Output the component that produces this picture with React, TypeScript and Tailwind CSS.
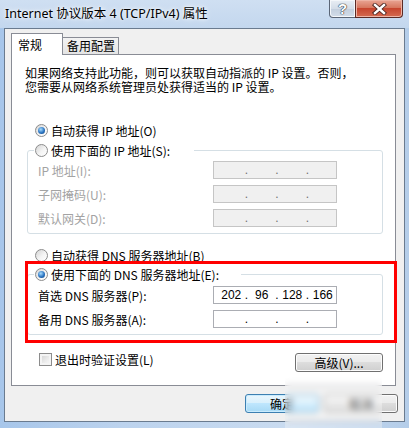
import React from "react";

const cjk = "font-['Noto_Sans_CJK_SC',sans-serif]";

function Radio({ checked }: { checked?: boolean }) {
  return (
    <span className="flex h-[13px] w-[13px] shrink-0 items-center justify-center rounded-full border border-[#8c8c8c] bg-[linear-gradient(135deg,#d4d4d4,#f4f4f4_55%,#ffffff)]">
      {checked ? (
        <span className="h-[7px] w-[7px] rounded-full bg-[radial-gradient(circle_at_40%_35%,#a8ddff,#2b74c1_55%,#0c3e78)]" />
      ) : null}
    </span>
  );
}

function IpField({ values, disabled }: { values?: string[]; disabled?: boolean }) {
  const segs = values ?? ["", "", "", ""];
  return (
    <div
      className={
        disabled
          ? "flex h-[18px] w-[124px] items-center border border-[#c5c5c5] bg-[#f0f0f0] pl-[4px] font-['Liberation_Sans',sans-serif] text-[12px] leading-[16px] text-[#6f6f6f]"
          : "flex h-[18px] w-[124px] items-center border border-[#abadb3] bg-white pl-[4px] font-['Liberation_Sans',sans-serif] text-[12px] leading-[16px] text-black"
      }
    >
      {segs.map((s, i) => (
        <React.Fragment key={i}>
          <span className="w-[27px] text-center">{s}</span>
          {i < 3 ? <span className="w-[4px] text-center">.</span> : null}
        </React.Fragment>
      ))}
    </div>
  );
}

function FieldRow({
  label,
  values,
  disabled,
  className = "",
}: {
  label: string;
  values?: string[];
  disabled?: boolean;
  className?: string;
}) {
  return (
    <div className={`flex h-[18px] items-center ${className}`}>
      <span className={disabled ? "w-[185px] pl-[10px] text-[#a3a3a3]" : "w-[185px] pl-[10px] text-black"}>
        {label}
      </span>
      <IpField values={values} disabled={disabled} />
    </div>
  );
}

function WinButton({ children, primary }: { children: React.ReactNode; primary?: boolean }) {
  return (
    <div
      className={
        primary
          ? "flex h-[19px] w-[74px] items-center justify-center rounded-[3px] border border-[#3c7fb1] bg-[linear-gradient(#eaf6fd,#d9f0fc_45%,#bee6fd_50%,#a7d9f5)] text-[12px] leading-none shadow-[inset_0_0_0_1px_#c9ebfd]"
          : "flex h-[19px] w-[74px] items-center justify-center rounded-[3px] border border-[#707070] bg-[linear-gradient(#f2f2f2,#ebebeb_45%,#dddddd_50%,#cfcfcf)] text-[12px] leading-none shadow-[inset_0_0_0_1px_#fcfcfc]"
      }
    >
      {children}
    </div>
  );
}

export default function App() {
  return (
    <div className="relative flex h-[428px] w-[409px] flex-col overflow-hidden bg-[linear-gradient(90deg,#a7c6ea,#bcd3ee_30%,#c9dbf0_70%,#b4cde9)]">
      {/* title bar */}
      <div className="flex h-[28px] shrink-0 items-start justify-between bg-[linear-gradient(180deg,#cfdff2,#c3d7ee)]">
        <span className="mt-[6px] pl-[5px] font-['Noto_Sans','Noto_Sans_CJK_SC',sans-serif] text-[12.5px] leading-[16px] text-black [text-shadow:0_0_6px_#fff,0_0_3px_#fff]">
          Internet 协议版本 4 (TCP/IPv4) 属性
        </span>
        <div className="mr-[6px] flex">
          <div className="flex h-[18px] w-[27px] items-center justify-center rounded-bl-[4px] border border-t-0 border-[#5a6576] bg-[linear-gradient(#e9eef4,#d4dde8_50%,#c2cedd_51%,#d3dde9)] shadow-[inset_0_0_0_1px_#f4f7fa]">
            <span className="font-['Liberation_Sans',sans-serif] text-[15px] font-bold leading-none text-white [text-shadow:0_0_1px_#2a2f38,0_0_1px_#2a2f38,0_0_1px_#2a2f38]">
              ?
            </span>
          </div>
          <div className="-ml-px flex h-[18px] w-[48px] items-center justify-center rounded-br-[4px] border border-t-0 border-[#5b2a25] bg-[linear-gradient(#e9a594,#d7775f_45%,#c7452e_50%,#d46a50)] shadow-[inset_0_0_0_1px_#eeb3a4]">
            <svg width="15" height="12" viewBox="0 0 15 12">
              <path d="M3 2 L12 10 M12 2 L3 10" stroke="#4a2420" strokeWidth="4.2" strokeLinecap="square" />
              <path d="M3 2 L12 10 M12 2 L3 10" stroke="#ffffff" strokeWidth="2.4" strokeLinecap="square" />
            </svg>
          </div>
        </div>
      </div>

      {/* client area */}
      <div className={`mx-[4px] h-[394px] shrink-0 border border-[#6a7b8f] bg-[#f0f0f0] pt-[4px] text-[12px] ${cjk}`}>
        <div className="relative z-10 ml-[6px] flex h-[21px] items-end">
          <div className="-mb-px flex h-[22px] w-[52px] items-center border border-b-0 border-[#898c95] bg-white pl-[6px] text-[12px] leading-none whitespace-nowrap">
            常规
          </div>
          <div className="-ml-px flex h-[17px] w-[57px] items-center border border-b-0 border-[#898c95] bg-[linear-gradient(#f3f3f3,#e4e4e4)] pl-[4px] text-[12px] leading-none whitespace-nowrap">
            备用配置
          </div>
        </div>

        <div className="ml-[6px] flex h-[332px] w-[385px] flex-col border border-[#898c95] bg-white pt-[11px] leading-[13px]">
          <p className="pl-[13px] leading-[14px] whitespace-nowrap">
            如果网络支持此功能，则可以获取自动指派的 IP 设置。否则，
            <br />
            您需要从网络系统管理员处获得适当的 IP 设置。
          </p>

          <div className="mt-[30px] flex h-[13px] items-center gap-[3px] pl-[23px]">
            <Radio checked />
            <span>自动获得 IP 地址(O)</span>
          </div>

          <fieldset className="mt-[7px] ml-[15px] w-[356px] rounded-[3px] border border-[#d5dfe5] pb-[6px]">
            <legend className="ml-[6px] pr-[24px] pl-[1px]">
              <span className="flex h-[13px] items-center gap-[3px]">
                <Radio />
                <span>使用下面的 IP 地址(S):</span>
              </span>
            </legend>
            <FieldRow className="mt-[4px]" label="IP 地址(I):" disabled />
            <FieldRow className="mt-[6px]" label="子网掩码(U):" disabled />
            <FieldRow className="mt-[6px]" label="默认网关(D):" disabled />
          </fieldset>

          <div className="mt-[15px] flex h-[13px] items-center gap-[3px] pl-[23px]">
            <Radio />
            <span>自动获得 DNS 服务器地址(B)</span>
          </div>

          <fieldset className="mt-[6px] ml-[15px] w-[356px] rounded-[3px] border border-[#d5dfe5] pb-[6px]">
            <legend className="ml-[6px] pr-[22px] pl-[1px]">
              <span className="flex h-[13px] items-center gap-[3px]">
                <Radio checked />
                <span>使用下面的 DNS 服务器地址(E):</span>
              </span>
            </legend>
            <FieldRow className="mt-[5px]" label="首选 DNS 服务器(P):" values={["202", "96", "128", "166"]} />
            <FieldRow className="mt-[6px]" label="备用 DNS 服务器(A):" />
          </fieldset>

          <div className="mt-[18px] flex h-[19px] items-start justify-between pr-[12px] pl-[27px]">
            <div className="flex h-[13px] items-center gap-[3px]">
              <span className="h-[13px] w-[13px] border border-[#8c8c8c] bg-[linear-gradient(135deg,#cfcfcf,#ededed_60%,#fafafa)] shadow-[inset_0_0_0_2px_#f4f4f4]" />
              <span>退出时验证设置(L)</span>
            </div>
            <div className="flex h-[19px] w-[88px] items-center justify-center rounded-[3px] border border-[#707070] bg-[linear-gradient(#f2f2f2,#ebebeb_45%,#dddddd_50%,#cfcfcf)] leading-none shadow-[inset_0_0_0_1px_#fcfcfc]">
              高级(V)...
            </div>
          </div>
        </div>

        <div className="mt-[8px] flex justify-end gap-[5px] pr-[6px]">
          <WinButton primary>确定</WinButton>
          <WinButton>取消</WinButton>
        </div>
      </div>

      {/* red annotation box */}
      <div className="pointer-events-none absolute top-[261px] left-[25px] h-[82px] w-[372px] border-[3px] border-[#ff0000]" />
      {/* blurred watermark */}
      <div className="pointer-events-none absolute top-[373px] left-[285px] h-[55px] w-[97px] bg-white/30 backdrop-blur-[3px]" />
    </div>
  );
}
